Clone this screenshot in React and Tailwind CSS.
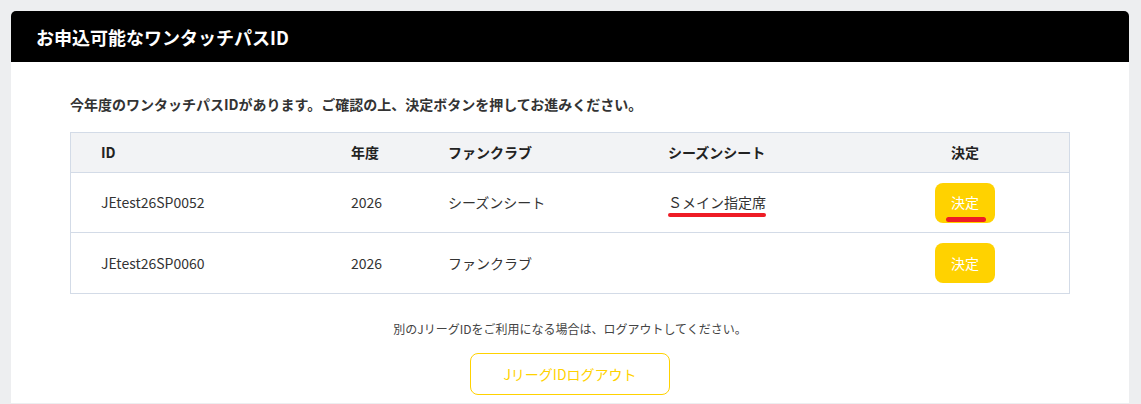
import React from 'react';

const rows = [
    { id: 'JEtest26SP0052', year: '2026', club: 'シーズンシート', seat: 'Ｓメイン指定席', mark: true },
    { id: 'JEtest26SP0060', year: '2026', club: 'ファンクラブ', seat: '', mark: false },
];

const cols = 'grid grid-cols-[250px_97px_220px_223px_1fr] items-center';

const App = () => {
    return (
        <div
            className="w-full min-h-[404px] bg-[#edeef0] pt-[11px] pl-[11px] pr-[12px]"
            style={{ fontFamily: '"Noto Sans CJK JP", "Noto Sans", sans-serif' }}
        >
            <div className="bg-white rounded-t-[5px] overflow-hidden">
                <div className="bg-black h-[51px] flex items-center pl-[25px]">
                    <h1 className="text-white text-[18px] font-bold leading-none">
                        お申込可能なワンタッチパスID
                    </h1>
                </div>

                <div className="px-[59px] pt-[32px] pb-[8px]">
                    <p className="text-[14px] font-bold text-[#333] leading-[20px] mb-[18px]">
                        今年度のワンタッチパスIDがあります。ご確認の上、決定ボタンを押してお進みください。
                    </p>

                    <div className="border border-[#d3dbe7] text-[14px] text-[#333]">
                        <div className={`${cols} h-[40px] bg-[#f2f3f5] font-bold text-[#222] border-b border-[#d3dbe7]`}>
                            <div className="pl-[30px]">ID</div>
                            <div className="pl-[30px]">年度</div>
                            <div className="pl-[30px]">ファンクラブ</div>
                            <div className="pl-[30px]">シーズンシート</div>
                            <div className="text-center">決定</div>
                        </div>
                        {rows.map((r, i) => (
                            <div
                                key={r.id}
                                className={`${cols} h-[60px] ${i === 0 ? 'border-b border-[#d3dbe7]' : ''}`}
                            >
                                <div className="pl-[30px]">{r.id}</div>
                                <div className="pl-[30px]">{r.year}</div>
                                <div className="pl-[30px]">{r.club}</div>
                                <div className="pl-[30px]">
                                    <span className="relative">
                                        {r.seat}
                                        {r.mark ? (
                                            <span className="absolute left-[0px] right-[0px] top-[21px] h-[4px] rounded-full bg-[#ee1c25]" />
                                        ) : null}
                                    </span>
                                </div>
                                <div className="flex justify-center">
                                    <button className="relative w-[60px] h-[40px] rounded-[8px] bg-[#ffd200] text-white text-[14px]">
                                        決定
                                        {r.mark ? (
                                            <span className="absolute left-[11px] w-[40px] top-[34px] h-[5px] rounded-full bg-[#ee1c25]" />
                                        ) : null}
                                    </button>
                                </div>
                            </div>
                        ))}
                    </div>

                    <p className="text-center text-[12px] text-[#444] mt-[26px] leading-[18px]">
                        別のJリーグIDをご利用になる場合は、ログアウトしてください。
                    </p>
                    <div className="flex justify-center mt-[15px]">
                        <button className="w-[200px] h-[42px] rounded-[8px] border border-[#ffd200] text-[#ffd200] text-[14px] bg-white">
                            JリーグIDログアウト
                        </button>
                    </div>
                </div>
            </div>
        </div>
    );
};

export default App;
